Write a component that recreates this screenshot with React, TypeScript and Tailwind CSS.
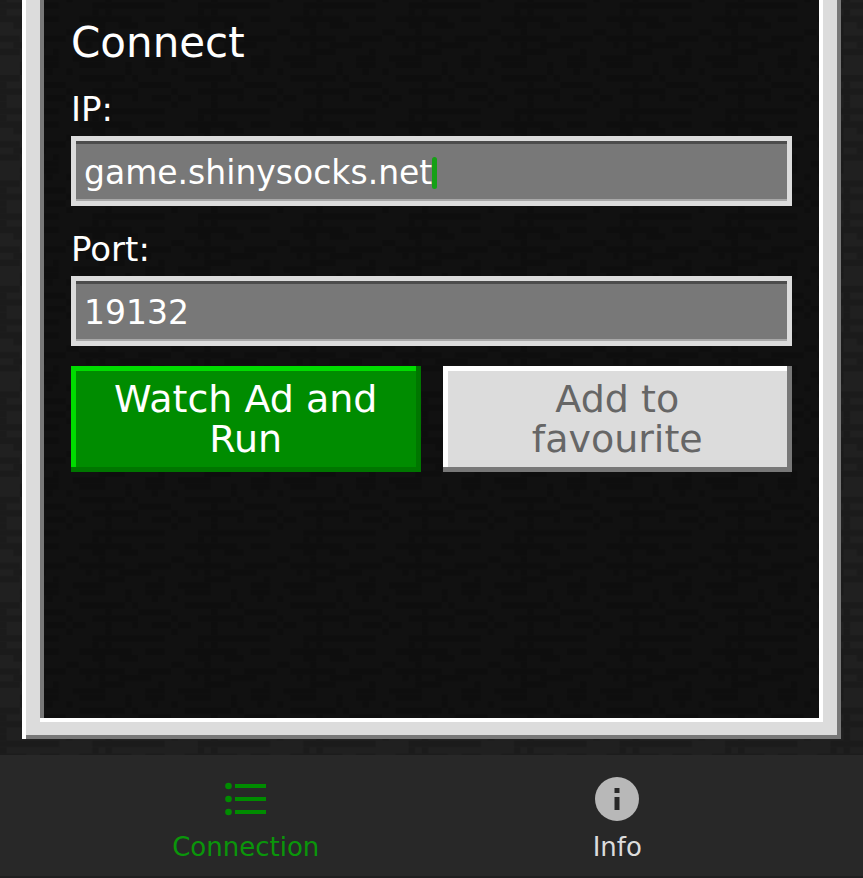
import { useId, useState, type ReactNode } from "react";

/* Runs of darker pixels in the 16x16 stone tile: [row, first column, length]. */
const STONE: [number, number, number][] = [
  [0, 0, 3], [0, 4, 1], [0, 12, 4],
  [1, 0, 1], [1, 5, 5],
  [2, 0, 5], [2, 10, 1], [2, 14, 2],
  [3, 0, 1], [3, 4, 1], [3, 7, 3], [3, 11, 2],
  [4, 0, 1], [4, 10, 1],
  [5, 0, 9], [5, 14, 2],
  [6, 0, 1], [6, 14, 1],
  [7, 0, 4], [7, 6, 3], [7, 12, 4],
  [8, 2, 3], [8, 14, 2],
  [9, 10, 2], [9, 15, 1],
  [10, 0, 3], [10, 5, 5], [10, 12, 4],
  [11, 2, 5], [11, 13, 1], [11, 15, 1],
  [12, 0, 3], [12, 8, 1], [12, 15, 1],
  [13, 6, 3], [13, 11, 5],
  [14, 3, 1], [14, 6, 3], [14, 12, 4],
  [15, 3, 1], [15, 7, 1], [15, 10, 1],
];

function StoneBackground() {
  return (
    <svg className="absolute inset-0 -z-10 h-full w-full" aria-hidden="true">
      <defs>
        <pattern
          id="stone"
          width="16"
          height="16"
          patternUnits="userSpaceOnUse"
          patternTransform="translate(0 75) scale(6.59)"
        >
          {STONE.map(([row, col, len]) => (
            <rect key={`${row}-${col}`} x={col} y={row} width={len} height="1" fill="#1b1b1b" />
          ))}
        </pattern>
      </defs>
      <rect width="100%" height="100%" fill="#202020" />
      <rect width="100%" height="100%" fill="url(#stone)" />
    </svg>
  );
}

function Panel({ children }: { children: ReactNode }) {
  return (
    <div className="flex flex-1 border-l-4 border-white">
      <div className="flex flex-1 border-r-4 border-b-4 border-[#787878]">
        <div className="flex flex-1 border-x-[14px] border-b-[13px] border-[#dcdcdc]">
          <div className="flex flex-1 border-r-4 border-b-4 border-white">
            <div className="flex-1 border-l-4 border-[#787878] bg-black/45 px-[27px]">
              {children}
            </div>
          </div>
        </div>
      </div>
    </div>
  );
}

type FieldProps = {
  label: string;
  value: string;
  onChange: (value: string) => void;
  active?: boolean;
};

function Field({ label, value, onChange, active }: FieldProps) {
  const id = useId();
  return (
    <div>
      <label htmlFor={id} className="block pb-1 text-[34px] leading-[46px]">
        {label}
      </label>
      <div className="flex h-[70px] items-center border-5 border-[#dcdcdc] bg-[#787878] px-2 pt-1 shadow-[inset_0_3px_0_#4c4c4c,inset_0_-2px_0_#a8a8a8]">
        <input
          id={id}
          type="text"
          value={value}
          onChange={(e) => onChange(e.target.value)}
          className="field-sizing-content max-w-full bg-transparent text-[33px] leading-10 outline-none"
        />
        {active && <span className="h-8 w-[5px] rounded-sm bg-[#16a016]" />}
      </div>
    </div>
  );
}

function NavButton({ label, className, children }: { label: string; className: string; children: ReactNode }) {
  return (
    <button type="button" className={`flex flex-1 flex-col items-center gap-2 text-[26px] leading-9 ${className}`}>
      {children}
      {label}
    </button>
  );
}

export default function App() {
  const [ip, setIp] = useState("game.shinysocks.net");
  const [port, setPort] = useState("19132");

  return (
    <div className="relative isolate flex min-h-screen flex-col font-['DejaVu_Sans',sans-serif] text-white">
      <StoneBackground />
      <main className="flex flex-1 flex-col px-[22px] pb-4">
        <Panel>
          <h1 className="pt-4 pb-4 text-[42px] leading-[54px]">Connect</h1>
          <form className="flex flex-col gap-5" onSubmit={(e) => e.preventDefault()}>
            <Field label="IP:" value={ip} onChange={setIp} active />
            <Field label="Port:" value={port} onChange={setPort} />
            <div className="grid grid-cols-2 gap-[22px] text-[38px] leading-10">
              <button type="submit" className="flex h-[106px] border-r-5 border-b-5 border-[#007600]">
                <span className="h-full flex-1 border-t-5 border-l-5 border-[#00dc00] bg-[#008c00] px-6 pt-2">
                  Watch Ad and Run
                </span>
              </button>
              <button type="button" className="flex h-[106px] border-r-5 border-b-5 border-[#787878] text-[#666]">
                <span className="h-full flex-1 border-t-5 border-l-5 border-white bg-[#dcdcdc] px-16 pt-2">
                  Add to favourite
                </span>
              </button>
            </div>
          </form>
        </Panel>
      </main>
      <nav className="flex h-[123px] items-start border-b-2 border-[#202020] bg-[#282828] px-[60px] pt-[22px]">
        <NavButton label="Connection" className="text-[#0a960a]">
          <svg width="44" height="44" viewBox="0 0 44 44" fill="#008c00" aria-hidden="true">
            <circle cx="4.500" cy="9" r="3.300" />
            <circle cx="4.500" cy="22" r="3.300" />
            <circle cx="4.500" cy="35" r="3.300" />
            <path d="M11 7h31v4H11zM11 20h31v4H11zM11 33h31v4H11z" />
          </svg>
        </NavButton>
        <NavButton label="Info" className="text-[#dcdcdc]">
          <svg width="44" height="44" viewBox="0 0 44 44" aria-hidden="true">
            <circle cx="22" cy="22" r="22" fill="#b8b8b8" />
            <path d="M19.500 11h5v5h-5zM19.500 20h5v13h-5z" fill="#282828" />
          </svg>
        </NavButton>
      </nav>
    </div>
  );
}
